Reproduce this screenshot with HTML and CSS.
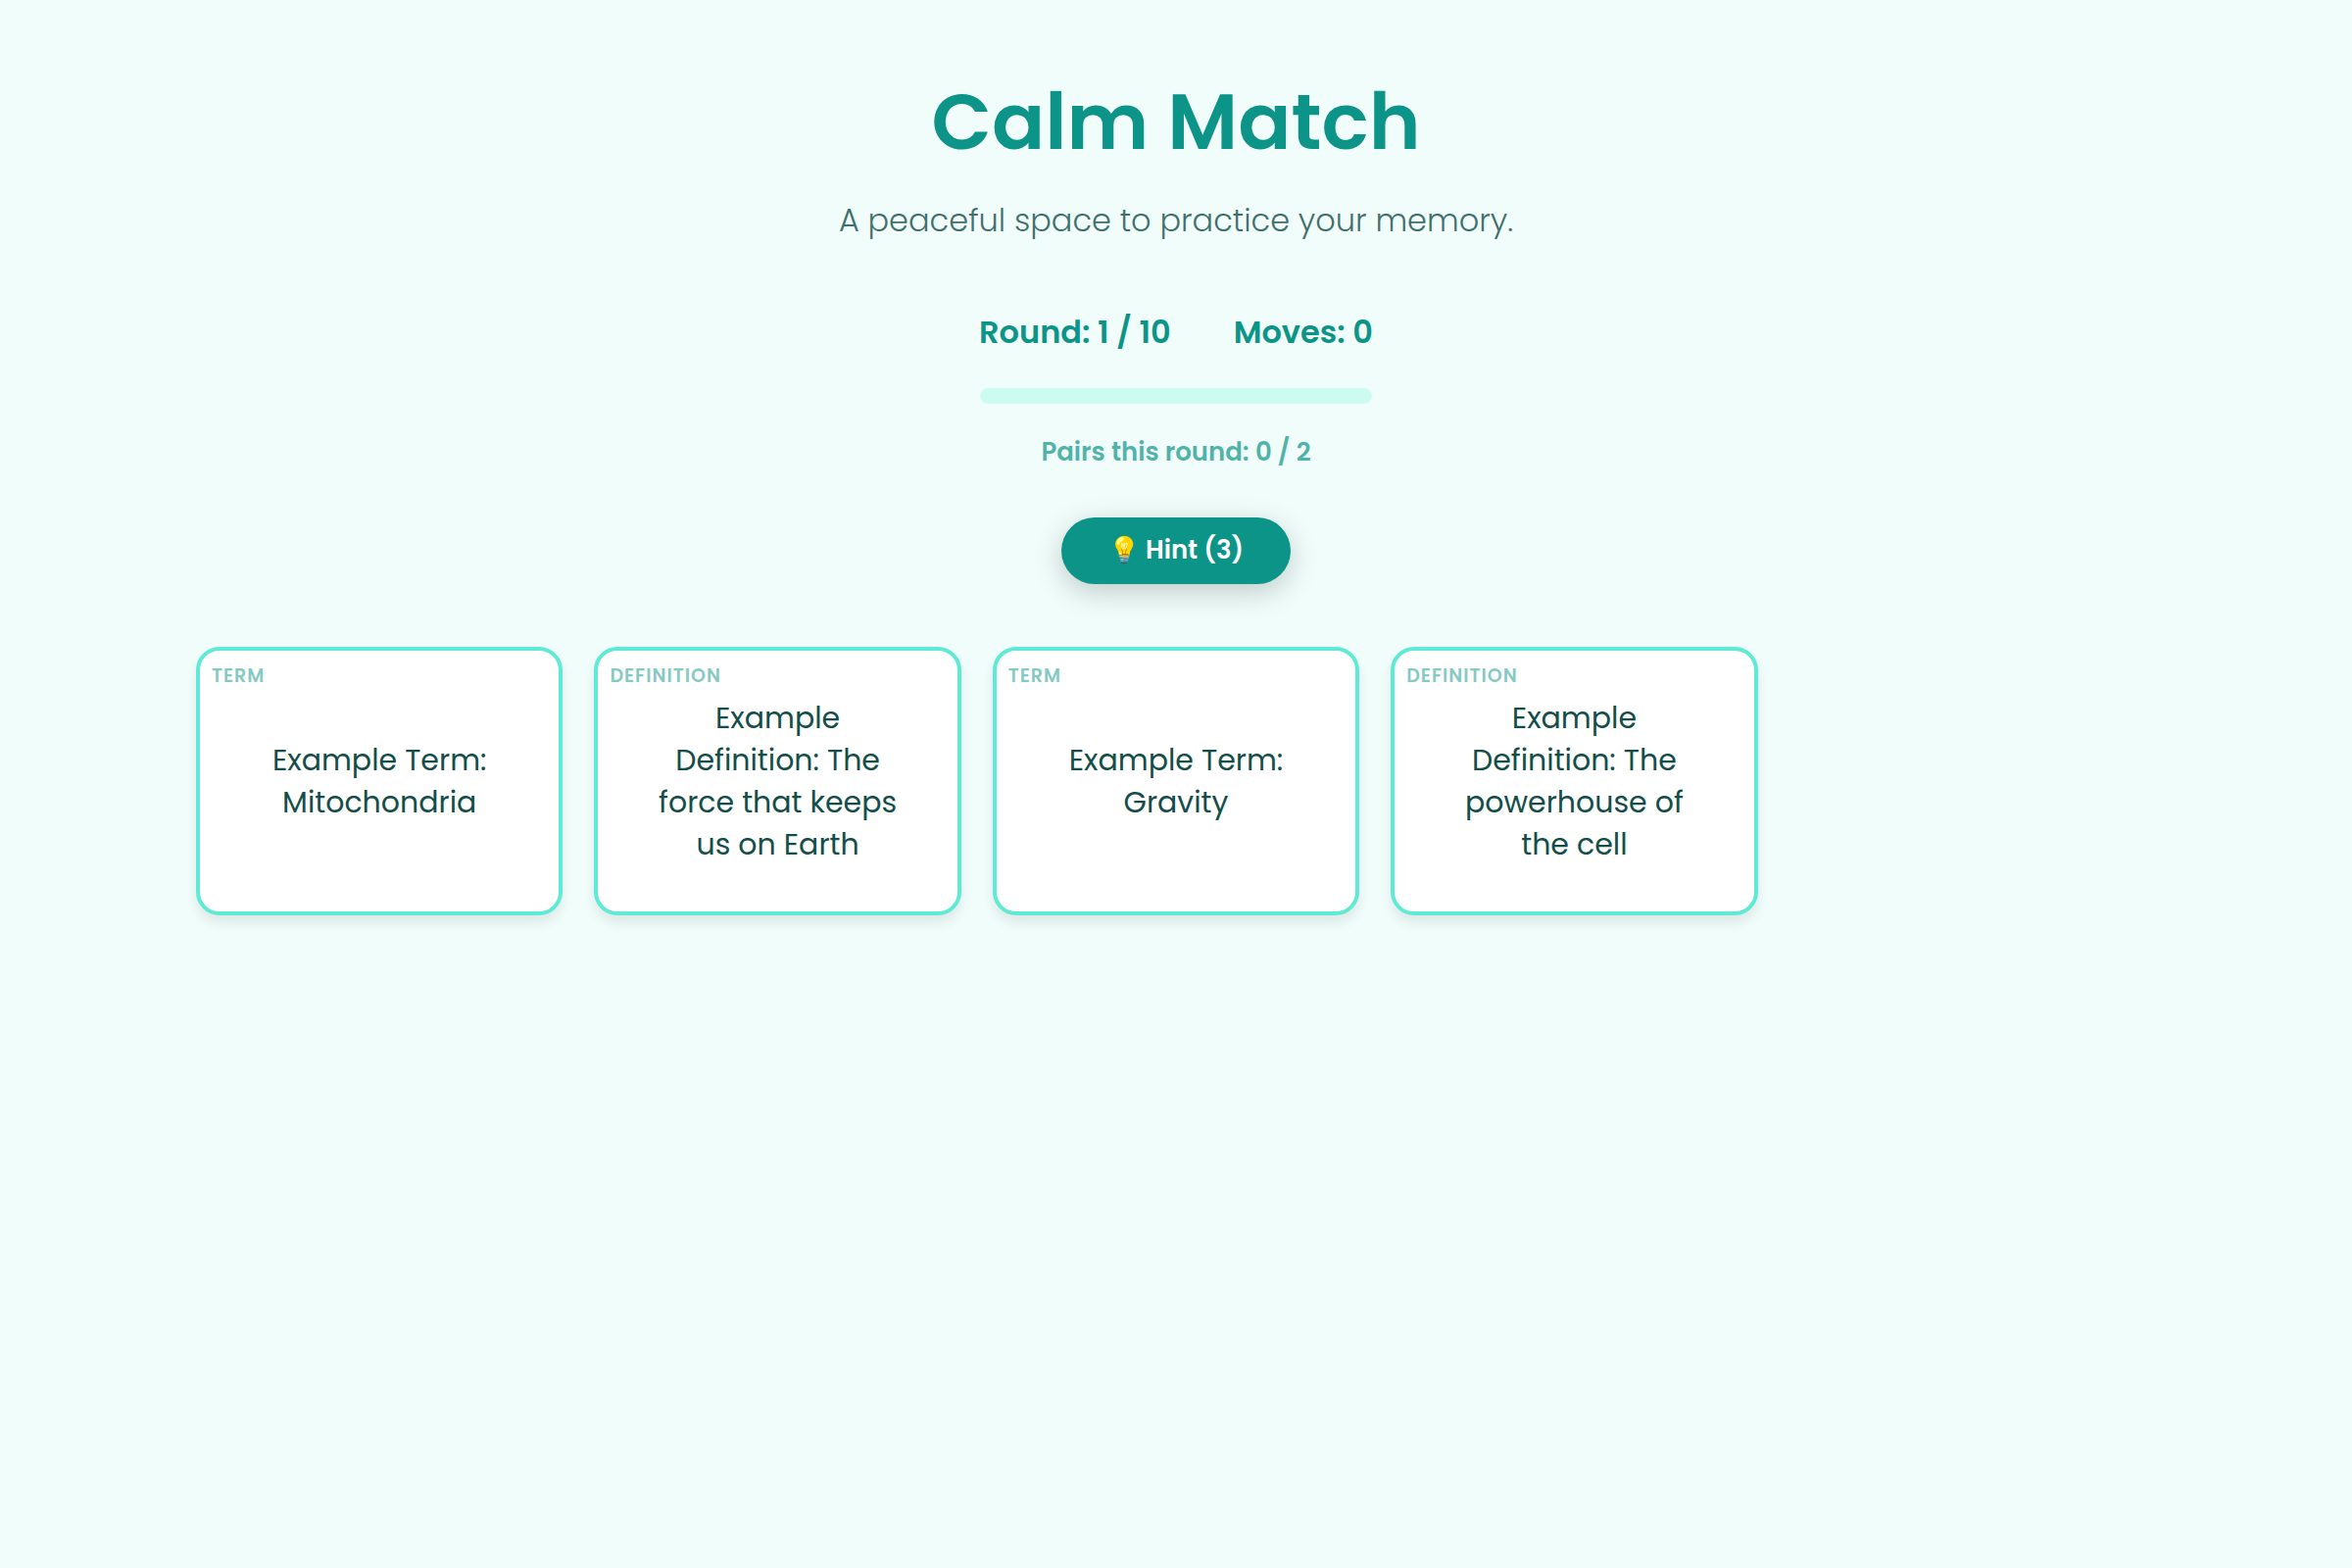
FILE: index.html
```html
<!DOCTYPE html>
<html lang="en">
<head>
    <meta charset="UTF-8">
    <meta name="viewport" content="width=device-width, initial-scale=1.0">
    <title>Calm Match</title>
    <link rel="stylesheet" href="styles.css">
</head>
<body>

<header class="header">
    <h1>Calm Match</h1>
    <p class="subtitle">A peaceful space to practice your memory.</p>
</header>

<section class="status">
    <div class="stats">
        <span>Round: 1 / 10</span>
        <span>Moves: 0</span>
    </div>
    <progress class="progress" value="0" max="10" aria-label="Rounds completed"></progress>
    <p class="pairs">Pairs this round: 0 / 2</p>
    <button class="hint-button" type="button">💡 Hint (3)</button>
</section>

<main class="board">
    <button class="card" type="button">
        <span class="card-type">Term</span>
        <span class="card-text">Example Term: Mitochondria</span>
    </button>
    <button class="card" type="button">
        <span class="card-type">Definition</span>
        <span class="card-text">Example Definition: The force that keeps us on Earth</span>
    </button>
    <button class="card" type="button">
        <span class="card-type">Term</span>
        <span class="card-text">Example Term: Gravity</span>
    </button>
    <button class="card" type="button">
        <span class="card-type">Definition</span>
        <span class="card-text">Example Definition: The powerhouse of the cell</span>
    </button>
</main>

</body>
</html>
```
FILE: styles.css
```css
* {
    box-sizing: border-box;
}
body {
    margin: 0;
    padding: 64px;
    background-color: #f0fdfa;
    color: #134e4a;
    font-family: Poppins, Inter, sans-serif;
}
button {
    font-family: inherit;
    cursor: pointer;
}
.header {
    text-align: center;
    margin-bottom: 64px;
}
h1 {
    margin: 0 0 16px;
    font-size: 80px;
    line-height: 120px;
    font-weight: 600;
    color: #0d9488;
}
.subtitle {
    margin: 0;
    font-size: 32px;
    line-height: 50px;
    font-weight: 300;
    opacity: 0.8;
}
.status {
    display: flex;
    flex-direction: column;
    align-items: center;
    margin-bottom: 64px;
    color: #0d9488;
}
.stats {
    display: flex;
    gap: 64px;
    margin-bottom: 32px;
    font-size: 32px;
    line-height: 50px;
    font-weight: 600;
}
.progress {
    display: block;
    appearance: none;
    width: 400px;
    max-width: 100%;
    height: 16px;
    border: none;
    border-radius: 8px;
    overflow: hidden;
    background-color: #ccfbf1;
}
.progress::-webkit-progress-bar {
    background-color: #ccfbf1;
}
.progress::-webkit-progress-value {
    background-color: #0d9488;
}
.pairs {
    margin: 30px 0 48px;
    font-size: 26px;
    line-height: 38px;
    font-weight: 600;
    opacity: 0.7;
}
.hint-button {
    padding: 14px 48px 16px;
    border: none;
    border-radius: 34px;
    background-color: #0d9488;
    color: white;
    font-size: 26px;
    line-height: 38px;
    font-weight: 600;
    box-shadow: 0 8px 30px rgba(0, 0, 0, 0.2);
}
.board {
    display: grid;
    grid-template-columns: repeat(auto-fill, minmax(320px, 1fr));
    gap: 32px;
    max-width: 2000px;
    margin: 0 auto;
}
.card {
    position: relative;
    display: flex;
    align-items: center;
    justify-content: center;
    min-height: 274px;
    padding: 40px 48px;
    border: 4px solid #5eead4;
    border-radius: 24px;
    background-color: white;
    color: #134e4a;
    font-size: 30px;
    line-height: 43px;
    font-weight: 400;
    text-align: center;
    box-shadow: 0 8px 12px rgba(0, 0, 0, 0.08);
}
.card-type {
    position: absolute;
    top: 12px;
    left: 12px;
    color: #0d9488;
    font-size: 19px;
    line-height: 28px;
    font-weight: 600;
    letter-spacing: 1px;
    text-transform: uppercase;
    opacity: 0.5;
}
```
